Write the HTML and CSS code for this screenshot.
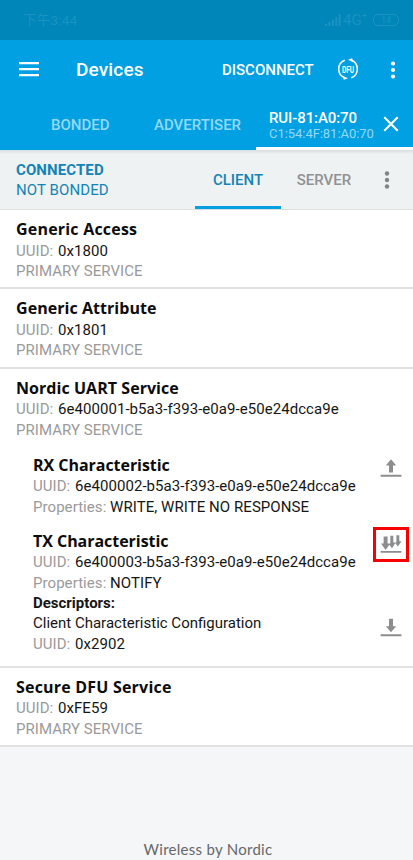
FILE: index.html
```html
<!DOCTYPE html>
<html lang="en">
<head>
<meta charset="utf-8">
<title>Devices</title>
<link rel="stylesheet" href="styles.css">
</head>
<body>
<div class="statusbar">
  <span class="clock">下午3:44</span>
  <span class="status-icons">
    <svg width="16" height="12" viewBox="0 0 16 12" fill="currentColor"><path d="M0 10h2v2H0zM3.4 8h2v4h-2zM6.8 5.500h2V12h-2zM10.200 3h2v9h-2zM13.600 0h2v12h-2z"/></svg>
    <span class="net">4G<sup>+</sup></span>
    <span class="battery">14</span>
  </span>
</div>
<header class="appbar">
  <svg class="menu" width="20" height="15" viewBox="0 0 20 15" fill="#fff"><path d="M0 0h20v2.200H0zM0 6h20v2.200H0zM0 12h20v2.200H0z"/></svg>
  <h1 class="title">Devices</h1>
  <span class="disconnect">DISCONNECT</span>
  <svg class="dfu" width="22" height="22" viewBox="0 0 22 22">
    <g fill="none" stroke="#fff" stroke-width="1.500"><path d="M7.800 2.200A9.400 9.400 0 0 0 7.500 19.700"/><path d="M14.200 19.800A9.400 9.400 0 0 0 14.500 2.300"/></g>
    <path d="M5.800 18.100l5.200 2.200-4.200 1.500zM16.200 3.900L11 1.700 15.200.2z" fill="#fff"/>
    <text x="4.900" y="14.500" textLength="12.200" lengthAdjust="spacingAndGlyphs" class="dfu-text">DFU</text>
  </svg>
  <svg class="more" width="6" height="18" viewBox="0 0 6 18" fill="#fff"><circle cx="3" cy="2.500" r="2.100"/><circle cx="3" cy="9" r="2.100"/><circle cx="3" cy="15.500" r="2.100"/></svg>
</header>
<nav class="tabs">
  <span class="tab bonded">BONDED</span>
  <span class="tab advertiser">ADVERTISER</span>
  <div class="tab-device">
    <div class="device-text">
      <div class="device-name">RUI-81:A0:70</div>
      <div class="device-mac">C1:54:4F:81:A0:70</div>
    </div>
    <svg class="close" width="16" height="16" viewBox="0 0 16 16" stroke="#fff" stroke-width="2"><path d="M1.300 1.300l13.400 13.400M14.700 1.300L1.300 14.700"/></svg>
  </div>
</nav>
<div class="statebar">
  <div class="state">
    <div class="connected">CONNECTED</div>
    <div class="notbonded">NOT BONDED</div>
  </div>
  <div class="subtab active"><span class="client">CLIENT</span></div>
  <div class="subtab"><span class="server">SERVER</span></div>
  <svg class="more2" width="6" height="18" viewBox="0 0 6 18" fill="#828486"><circle cx="3" cy="2.500" r="2.200"/><circle cx="3" cy="9" r="2.200"/><circle cx="3" cy="15.500" r="2.200"/></svg>
</div>
<main class="services">
  <section class="service">
    <h2 class="wide">Generic Access</h2>
    <p class="uuid"><i>UUID:</i> 0x1800</p>
    <p class="kind"><i>PRIMARY SERVICE</i></p>
  </section>
  <section class="service">
    <h2>Generic Attribute</h2>
    <p class="uuid"><i>UUID:</i> 0x1801</p>
    <p class="kind"><i>PRIMARY SERVICE</i></p>
  </section>
  <section class="service uart">
    <h2>Nordic UART Service</h2>
    <p class="uuid"><i>UUID:</i> 6e400001-b5a3-f393-e0a9-e50e24dcca9e</p>
    <p class="kind"><i>PRIMARY SERVICE</i></p>
    <div class="char rx">
      <div class="info">
        <h2 class="narrow">RX Characteristic</h2>
        <p class="uuid"><i>UUID:</i> 6e400002-b5a3-f393-e0a9-e50e24dcca9e</p>
        <p class="props"><i>Properties:</i> WRITE, WRITE NO RESPONSE</p>
      </div>
      <svg class="up" width="22" height="19" viewBox="0 0 22 19" fill="#8b8d8f"><path d="M11 .2l5.200 6.400h-3.200V13.600H9V6.600H5.800zM.6 15.800h20.800v2H.6z"/></svg>
    </div>
    <div class="char tx">
      <div class="info">
        <h2 class="narrow">TX Characteristic</h2>
        <p class="uuid"><i>UUID:</i> 6e400003-b5a3-f393-e0a9-e50e24dcca9e</p>
        <p class="props"><i>Properties:</i> NOTIFY</p>
        <p class="desc">Descriptors:</p>
        <p class="config">Client Characteristic Configuration</p>
        <p class="uuid"><i>UUID:</i> 0x2902</p>
      </div>
      <div class="actions">
        <div class="highlight"><svg width="22" height="19" viewBox="0 0 22 19" fill="#8b8d8f"><path d="M3.600 1.500h4v7h2.600L5.600 15 1 8.500h2.600zM10.300.8h3v6.700h2.400L12 13.200 9.300 9.700l1-1.500zM16.400.2h2.900v6h2.200L17.900 11.500l-2.500-3.200 1-1.500zM.6 16h20.800v1.800H.6z"/></svg></div>
        <svg class="down" width="22" height="19" viewBox="0 0 22 19" fill="#8b8d8f"><path d="M11 14.200l5.200-6h-3.200V.8H9v7.400H5.800zM.6 16.300h20.800v2H.6z"/></svg>
      </div>
    </div>
  </section>
  <section class="service">
    <h2 class="wide">Secure DFU Service</h2>
    <p class="uuid"><i>UUID:</i> 0xFE59</p>
    <p class="kind"><i>PRIMARY SERVICE</i></p>
  </section>
</main>
<footer><span>Wireless by Nordic</span></footer>
</body>
</html>
```

FILE: styles.css
```css
* { box-sizing: border-box; }
body {
  margin: 0;
  width: 413px;
  height: 860px;
  overflow: hidden;
  background: #f5f6f8;
  color: #161616;
  font-family: Roboto, sans-serif;
  font-size: 15px;
  display: flex;
  flex-direction: column;
}
h1, h2, p { margin: 0; }
i { font-style: normal; color: #9a9a9a; }
svg { display: block; flex: none; }

.statusbar {
  height: 40px;
  flex: none;
  background: #0086b9;
  color: #1a93c3;
  display: flex;
  justify-content: space-between;
  align-items: center;
  padding: 0 14px 0 23px;
}
.clock { font: 13.500px/20px Roboto, "Noto Sans CJK SC", sans-serif; letter-spacing: .2px; }
.status-icons { display: flex; align-items: center; gap: 2px; }
.net { font-size: 15px; line-height: 16px; width: 28px; }
.net sup { font-size: 9px; line-height: 0; }
.battery {
  width: 26px;
  height: 12px;
  border: 1px solid #1a93c3;
  border-radius: 5px;
  font-size: 9px;
  line-height: 10px;
  text-align: center;
}

.appbar {
  height: 60px;
  flex: none;
  background: #00a0e2;
  color: #fff;
  display: flex;
  align-items: center;
  padding-left: 19px;
}
.menu { margin-top: -1px; }
.title { font-size: 19px; font-weight: 500; letter-spacing: .15px; line-height: 24px; width: 146px; margin-left: 37px; }
.disconnect { font-size: 15px; font-weight: 500; width: 115px; }
.dfu { overflow: visible; margin-top: -2px; }
.dfu-text { font: bold 9.500px Roboto, sans-serif; fill: #fff; }
.more { margin-left: 31px; margin-top: -1px; }

.tabs {
  height: 50px;
  flex: none;
  background: #00a0e2;
  display: flex;
  font-weight: 500;
}
.tab { color: #94d9f4; line-height: 50px; font-size: 15px; }
.bonded { width: 154px; padding-left: 51px; }
.advertiser { width: 102px; white-space: nowrap; }
.tab-device {
  flex: 1;
  border-bottom: 3px solid #fff;
  color: #fff;
  display: flex;
  padding: 9px 0 0 13px;
}
.device-text { width: 114px; white-space: nowrap; }
.device-name { font-size: 15px; letter-spacing: -.1px; line-height: 18px; }
.device-mac { font-size: 13px; letter-spacing: -.05px; line-height: 13px; font-weight: 400; color: #94d9f4; }
.close { margin-top: 7px; }

.statebar {
  height: 60px;
  flex: none;
  background: linear-gradient(#d9dddf, #eff2f3 4px);
  border-bottom: 1px solid #dcdfe0;
  display: flex;
  color: #1484b4;
}
.state { width: 195px; padding: 10px 0 0 16px; line-height: 20px; }
.connected { font-weight: 700; letter-spacing: .1px; }
.notbonded { letter-spacing: .1px; }
.subtab {
  width: 86px;
  text-align: center;
  line-height: 60px;
  font-weight: 500;
  color: #8f9193;
}
.subtab.active { color: #1484b4; border-bottom: 3px solid #00a0e2; }
.more2 { margin: 21px 0 0 17px; }

.services { background: #fff; flex: none; }
.service {
  height: 79.400px;
  padding: 9px 0 0 16px;
  border-bottom: 2px solid #e2e2e2;
}
.uart { height: 299px; }
h2 {
  font: 700 16px/21.500px "Open Sans", sans-serif;
  letter-spacing: .05px;
  color: #0c0c0c;
  white-space: nowrap;
}
.wide { letter-spacing: .2px; }
.narrow { letter-spacing: -.04px; }
p { line-height: 20.400px; white-space: nowrap; }
.uuid { letter-spacing: .05px; }
.uuid i { margin-right: 1px; }
.kind { letter-spacing: .05px; }
.props { letter-spacing: .06px; }
.char { display: flex; margin-left: 17px; }
.info { width: 347px; flex: none; }
.rx { margin-top: 14.800px; }
.tx { margin-top: 13.400px; }
.up { margin-top: 4px; }
.desc { font-weight: 700; }
.highlight {
  width: 36px;
  height: 35px;
  margin: -4px 0 0 -7px;
  border: 3px solid #f80000;
  padding: 5px 0 0 4px;
}
.down { margin-top: 56px; }

footer {
  flex: 1;
  padding: 91px 0 0 143.500px;
  font: 15px/22px Lato, sans-serif;
  letter-spacing: .28px;
  color: #66686a;
  white-space: nowrap;
}
```
